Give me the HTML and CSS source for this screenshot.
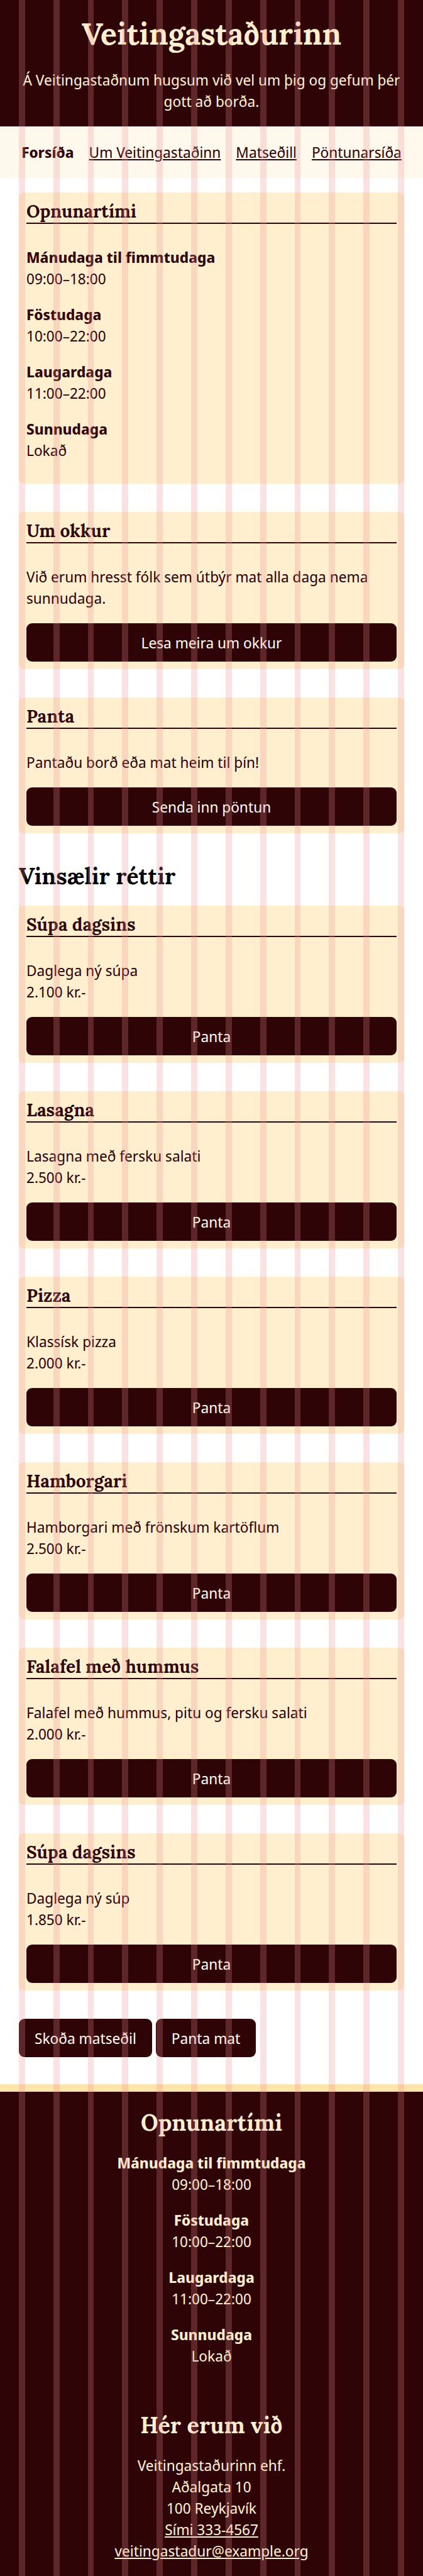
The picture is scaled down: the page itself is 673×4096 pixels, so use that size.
FILE: index.html
```html
<!DOCTYPE html>
<html lang="is">
<head>
  <meta charset="utf-8">
  <meta name="viewport" content="width=device-width, initial-scale=1">
  <title>Veitingastaðurinn</title>
  <link rel="stylesheet" href="styles.css">
</head>
<body>
  <header class="header">
    <h1 class="header__title">Veitingastaðurinn</h1>
    <p class="header__text">Á Veitingastaðnum hugsum við vel um þig og gefum þér gott að borða.</p>
  </header>
  <nav class="nav">
    <ul class="nav__list">
      <li><a class="nav__link nav__link--active" href="#forsida" aria-current="page">Forsíða</a></li>
      <li><a class="nav__link" href="#um">Um Veitingastaðinn</a></li>
      <li><a class="nav__link" href="#matsedill">Matseðill</a></li>
      <li><a class="nav__link" href="#pontun">Pöntunarsíða</a></li>
    </ul>
  </nav>
  <main class="main">
    <section class="cards">
      <article class="card">
        <h2 class="card__title">Opnunartími</h2>
        <dl class="hours hours--card">
          <div><dt>Mánudaga til fimmtudaga</dt><dd>09:00–18:00</dd></div>
          <div><dt>Föstudaga</dt><dd>10:00–22:00</dd></div>
          <div><dt>Laugardaga</dt><dd>11:00–22:00</dd></div>
          <div><dt>Sunnudaga</dt><dd>Lokað</dd></div>
        </dl>
      </article>
      <article class="card">
        <h2 class="card__title">Um okkur</h2>
        <p class="card__text">Við erum hresst fólk sem útbýr mat alla daga nema sunnudaga.</p>
        <button class="button" type="button">Lesa meira um okkur</button>
      </article>
      <article class="card">
        <h2 class="card__title">Panta</h2>
        <p class="card__text">Pantaðu borð eða mat heim til þín!</p>
        <button class="button" type="button">Senda inn pöntun</button>
      </article>
    </section>
    <section class="dishes">
      <h2 class="dishes__title">Vinsælir réttir</h2>
      <div class="cards">
        <article class="card">
          <h3 class="card__title">Súpa dagsins</h3>
          <div class="card__text"><p>Daglega ný súpa</p><p>2.100 kr.-</p></div>
          <button class="button" type="button">Panta</button>
        </article>
        <article class="card">
          <h3 class="card__title">Lasagna</h3>
          <div class="card__text"><p>Lasagna með fersku salati</p><p>2.500 kr.-</p></div>
          <button class="button" type="button">Panta</button>
        </article>
        <article class="card">
          <h3 class="card__title">Pizza</h3>
          <div class="card__text"><p>Klassísk pizza</p><p>2.000 kr.-</p></div>
          <button class="button" type="button">Panta</button>
        </article>
        <article class="card">
          <h3 class="card__title">Hamborgari</h3>
          <div class="card__text"><p>Hamborgari með frönskum kartöflum</p><p>2.500 kr.-</p></div>
          <button class="button" type="button">Panta</button>
        </article>
        <article class="card">
          <h3 class="card__title">Falafel með hummus</h3>
          <div class="card__text"><p>Falafel með hummus, pitu og fersku salati</p><p>2.000 kr.-</p></div>
          <button class="button" type="button">Panta</button>
        </article>
        <article class="card">
          <h3 class="card__title">Súpa dagsins</h3>
          <div class="card__text"><p>Daglega ný súp</p><p>1.850 kr.-</p></div>
          <button class="button" type="button">Panta</button>
        </article>
      </div>
    </section>
    <div class="actions">
      <button class="button" type="button">Skoða matseðil</button>
      <button class="button" type="button">Panta mat</button>
    </div>
  </main>
  <footer class="footer">
    <section>
      <h2 class="footer__title">Opnunartími</h2>
      <dl class="hours">
        <div><dt>Mánudaga til fimmtudaga</dt><dd>09:00–18:00</dd></div>
        <div><dt>Föstudaga</dt><dd>10:00–22:00</dd></div>
        <div><dt>Laugardaga</dt><dd>11:00–22:00</dd></div>
        <div><dt>Sunnudaga</dt><dd>Lokað</dd></div>
      </dl>
    </section>
    <section>
      <h2 class="footer__title">Hér erum við</h2>
      <address class="address">
        <p>Veitingastaðurinn ehf.</p>
        <p>Aðalgata 10</p>
        <p>100 Reykjavík</p>
        <p><a class="address__link" href="tel:3334567">Sími 333-4567</a></p>
        <p><a class="address__link" href="mailto:veitingastadur@example.org">veitingastadur@example.org</a></p>
      </address>
    </section>
  </footer>
  <div class="grid-overlay" aria-hidden="true">
    <span></span><span></span><span></span><span></span><span></span><span></span>
    <span></span><span></span><span></span><span></span><span></span><span></span>
  </div>
</body>
</html>
```
FILE: styles.css
```css
:root {
  --dark: #2e0406;
  --cream: #ffefcf;
  --light: #fff8ed;
  --border: #ffe5ab;
  --stripe: rgba(236, 138, 142, 0.25);
  --heading: "Lora", "Noto Serif", "Liberation Serif", serif;
}

*,
*::before,
*::after {
  box-sizing: border-box;
}

body,
h1, h2, h3, p, dl, dd, ul {
  margin: 0;
}

body {
  position: relative;
  background: #fff;
  color: #000;
  font-family: "Noto Sans Display", "Noto Sans", sans-serif;
  font-size: 24px;
  line-height: 34px;
}

h1, h2, h3 {
  font-family: var(--heading);
  font-weight: 700;
}

.header {
  padding: 24px 30px 23px;
  background: var(--dark);
  color: var(--cream);
  text-align: center;
}

.header__title {
  margin-bottom: 26px;
  font-size: 48px;
  line-height: 60px;
}

.nav {
  padding: 24px 30px;
  background: var(--light);
}

.nav__list {
  display: flex;
  justify-content: center;
  gap: 24px;
  padding: 0;
  list-style: none;
}

.nav__link {
  color: var(--dark);
}

.nav__link--active {
  font-weight: 700;
  text-decoration: none;
}

.main {
  display: flex;
  flex-direction: column;
  gap: 45px;
  padding: 23px 30px 43px;
}

.cards {
  display: grid;
  gap: 45px;
}

.card {
  display: flex;
  flex-direction: column;
  padding: 12px;
  border-radius: 8px;
  background: var(--cream);
  color: var(--dark);
}

.card__title {
  margin-bottom: 36px;
  border-bottom: 2px solid var(--dark);
  font-size: 28px;
  line-height: 36px;
}

.card__text {
  margin-bottom: 23px;
}

.hours {
  display: grid;
  gap: 23px;
}

.hours--card {
  margin-bottom: 24px;
}

.hours dt {
  font-weight: 700;
}

.button {
  padding: 14px 25px 13px;
  border: 0;
  border-radius: 9px;
  background: var(--dark);
  color: var(--light);
  font: inherit;
}

.dishes__title {
  margin-bottom: 24px;
  font-size: 36px;
  line-height: 46px;
}

.actions {
  display: flex;
  gap: 6px;
}

.footer {
  display: grid;
  gap: 70px;
  padding: 26px 30px 23px;
  border-top: 12px solid var(--border);
  background: var(--dark);
  color: var(--cream);
  text-align: center;
}

.footer__title {
  margin-bottom: 24px;
  font-size: 36px;
  line-height: 46px;
}

.address {
  font-style: normal;
}

.address__link {
  color: inherit;
}

/* Column guides drawn over the whole page */
.grid-overlay {
  position: absolute;
  inset: 0;
  display: grid;
  grid-template-columns: repeat(12, 1fr);
  column-gap: 45px;
  padding: 0 30px;
  pointer-events: none;
}

.grid-overlay span {
  background: var(--stripe);
}
```
